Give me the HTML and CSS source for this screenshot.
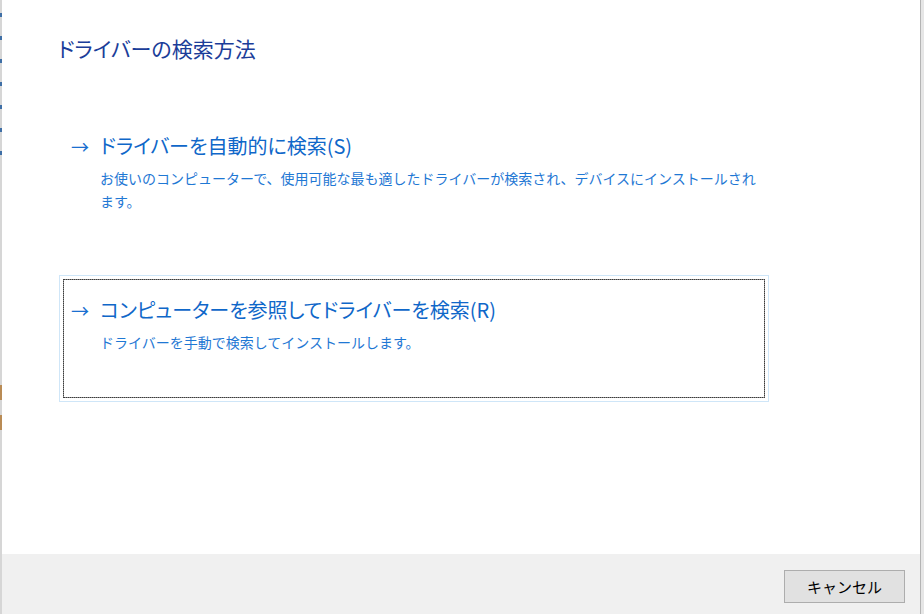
FILE: index.html
```html
<!DOCTYPE html>
<html lang="ja">
<head>
    <meta charset="UTF-8">
    <meta name="viewport" content="width=device-width, initial-scale=1.0">
    <title>ドライバーの検索方法</title>
    <link rel="stylesheet" href="styles.css">
</head>
<body>
    <div class="edge"></div>

    <div class="window">
        <main class="content">
            <h1 class="page-title">ドライバーの検索方法</h1>

            <!-- Search options -->
            <div class="options">
                <div class="option">
                    <div class="option-inner">
                        <span class="arrow">→</span>
                        <div class="option-text">
                            <div class="option-title">ドライバーを自動的に検索(S)</div>
                            <p class="option-desc">お使いのコンピューターで、使用可能な最も適したドライバーが検索され、デバイスにインストールされます。</p>
                        </div>
                    </div>
                </div>

                <div class="option focused">
                    <div class="option-inner">
                        <span class="arrow">→</span>
                        <div class="option-text">
                            <div class="option-title">コンピューターを参照してドライバーを検索(R)</div>
                            <p class="option-desc">ドライバーを手動で検索してインストールします。</p>
                        </div>
                    </div>
                </div>
            </div>
        </main>

        <footer class="footer">
            <button class="btn" type="button">キャンセル</button>
        </footer>
    </div>

    <div class="outside"></div>
</body>
</html>
```

FILE: styles.css
```css
/* Page frame */
body {
    margin: 0;
    width: 924px;
    height: 614px;
    display: flex;
    overflow: hidden;
    font-family: "Noto Sans CJK JP", "Noto Sans", sans-serif;
    background-color: #ffffff;
}

/* Strip of the window behind, on the left */
.edge {
    width: 2px;
    flex-shrink: 0;
    background:
        repeating-linear-gradient(to bottom,
            transparent 0, transparent 13px,
            #3f6fa6 13px, #3f6fa6 17px,
            transparent 17px, transparent 23px) 0 0 / 2px 160px no-repeat,
        linear-gradient(to bottom, transparent 385px, #b98b55 385px, #b98b55 400px, transparent 400px, transparent 415px, #b98b55 415px, #b98b55 430px, transparent 430px),
        #d6d6d6;
}

.window {
    width: 918px;
    flex-shrink: 0;
    display: flex;
    flex-direction: column;
    border-right: 1px solid #b4b4b4;
    background-color: #ffffff;
}

.outside {
    flex: 1;
    background-color: #e6e6e6;
}

/* Main area */
.content {
    flex: 1;
    padding: 32px 0 0 56px;
}

.page-title {
    margin: 0 0 47px;
    font-size: 21px;
    font-weight: 400;
    line-height: 32px;
    color: #1b3d99;
    font-feature-settings: "palt";
}

.options {
    display: flex;
    flex-direction: column;
    gap: 37px;
    margin-left: 1px;
}

/* Option cards */
.option {
    width: 702px;
    padding: 3px;
    border: 1px solid transparent;
}

.option.focused {
    border-color: #cfe6f8;
}

.option-inner {
    height: 119px;
    display: flex;
    padding: 15px 0 0 7px;
    border: 1px dotted transparent;
    box-sizing: border-box;
}

.option.focused .option-inner {
    border: 1px solid #8c8c8c;
    outline: 1px dotted #3c3c3c;
    outline-offset: -1px;
}

.arrow {
    width: 29px;
    flex-shrink: 0;
    font-size: 18px;
    line-height: 30px;
    color: #1a6fd0;
}

.option-title {
    font-size: 20px;
    line-height: 30px;
    color: #0f67c9;
    font-feature-settings: "palt";
}

.option-desc {
    width: 665px;
    margin: 6px 0 0;
    font-size: 14px;
    line-height: 23px;
    color: #1f78d4;
}

/* Bottom bar */
.footer {
    height: 60px;
    display: flex;
    justify-content: flex-end;
    align-items: flex-start;
    padding: 16px 15px 0 0;
    box-sizing: border-box;
    background-color: #f0f0f0;
}

.btn {
    width: 121px;
    height: 33px;
    padding: 0;
    font-family: inherit;
    font-size: 15px;
    color: #000000;
    background-color: #e1e1e1;
    border: 1px solid #adadad;
}
```
